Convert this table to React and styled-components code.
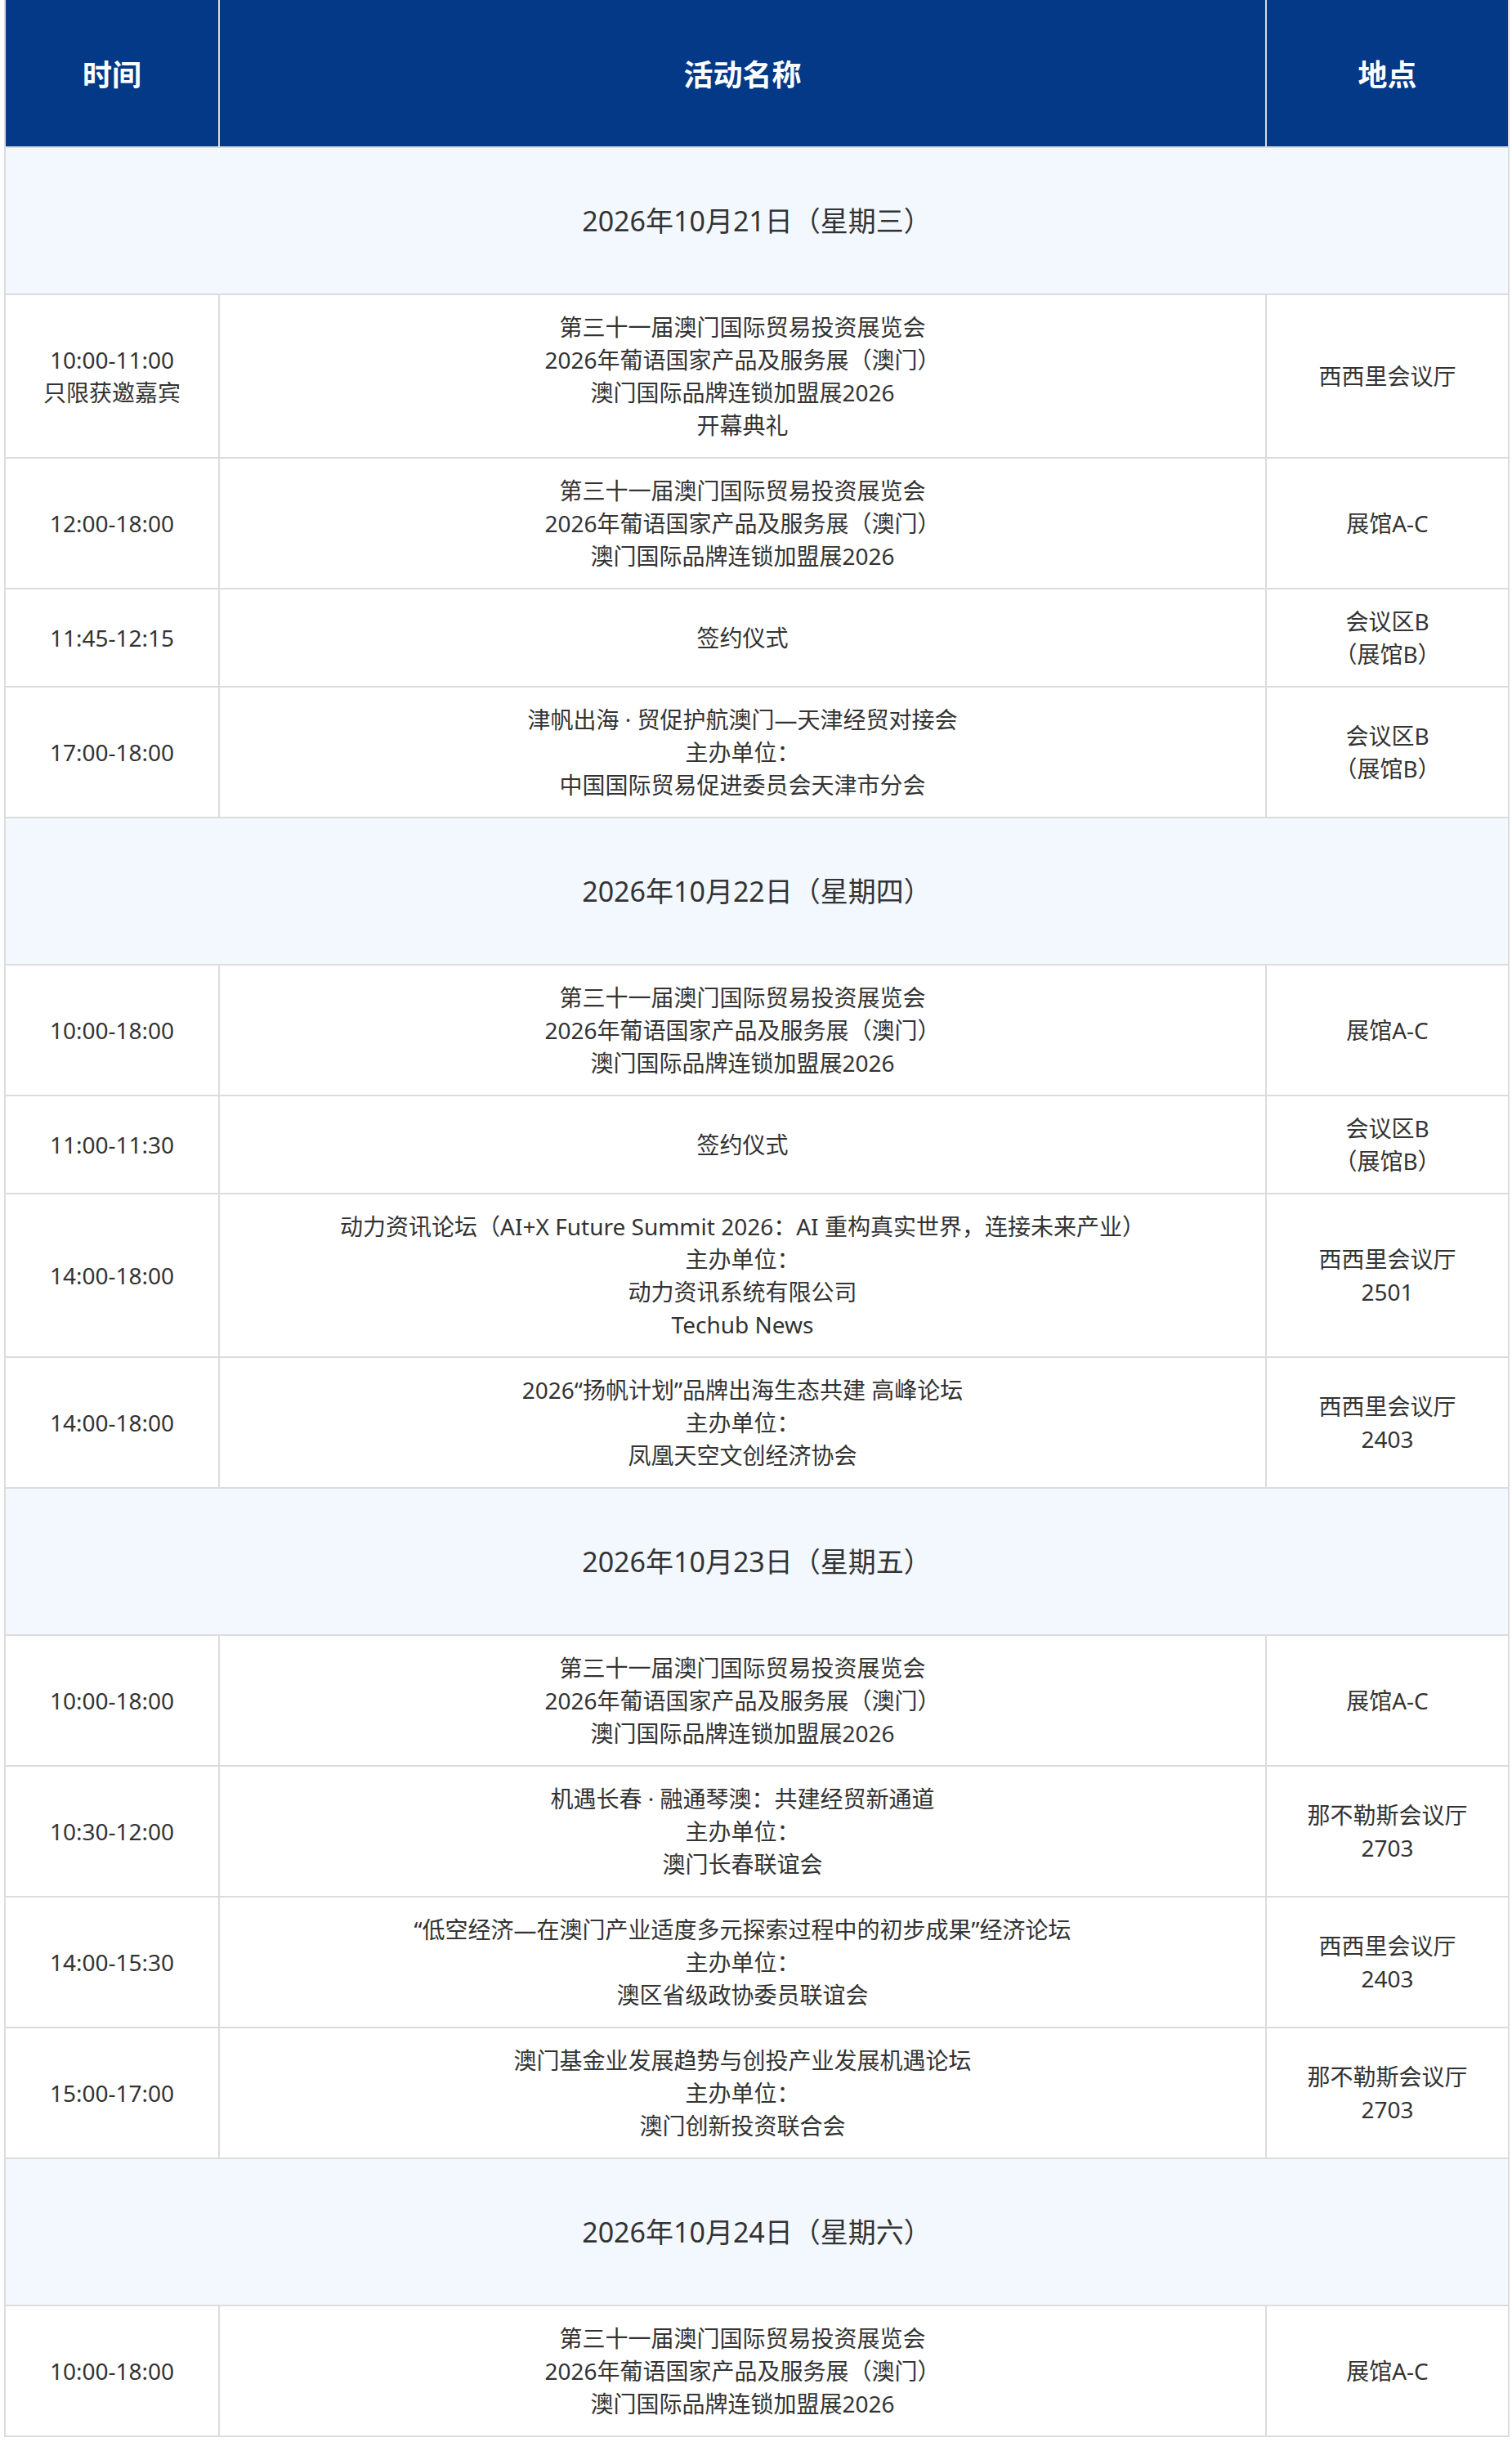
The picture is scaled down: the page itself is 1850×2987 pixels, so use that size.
import React from "react";
import styled, { createGlobalStyle } from "styled-components";

const GlobalStyle = createGlobalStyle`
  body {
    margin: 0;
    background: #ffffff;
    font-family: "Noto Sans", "Noto Sans CJK SC", sans-serif;
  }
`;

const EXPO = [
  "第三十一届澳门国际贸易投资展览会",
  "2026年葡语国家产品及服务展（澳门）",
  "澳门国际品牌连锁加盟展2026",
];

const schedule = [
  {
    day: "2026年10月21日（星期三）",
    items: [
      { time: ["10:00-11:00", "只限获邀嘉宾"], name: [...EXPO, "开幕典礼"], place: ["西西里会议厅"] },
      { time: ["12:00-18:00"], name: EXPO, place: ["展馆A-C"] },
      { time: ["11:45-12:15"], name: ["签约仪式"], place: ["会议区B", "（展馆B）"] },
      {
        time: ["17:00-18:00"],
        name: ["津帆出海 · 贸促护航澳门—天津经贸对接会", "主办单位：", "中国国际贸易促进委员会天津市分会"],
        place: ["会议区B", "（展馆B）"],
      },
    ],
  },
  {
    day: "2026年10月22日（星期四）",
    items: [
      { time: ["10:00-18:00"], name: EXPO, place: ["展馆A-C"] },
      { time: ["11:00-11:30"], name: ["签约仪式"], place: ["会议区B", "（展馆B）"] },
      {
        time: ["14:00-18:00"],
        name: [
          "动力资讯论坛（AI+X Future Summit 2026：AI 重构真实世界，连接未来产业）",
          "主办单位：",
          "动力资讯系统有限公司",
          "Techub News",
        ],
        place: ["西西里会议厅", "2501"],
      },
      {
        time: ["14:00-18:00"],
        name: ["2026“扬帆计划”品牌出海生态共建 高峰论坛", "主办单位：", "凤凰天空文创经济协会"],
        place: ["西西里会议厅", "2403"],
      },
    ],
  },
  {
    day: "2026年10月23日（星期五）",
    items: [
      { time: ["10:00-18:00"], name: EXPO, place: ["展馆A-C"] },
      {
        time: ["10:30-12:00"],
        name: ["机遇长春 · 融通琴澳：共建经贸新通道", "主办单位：", "澳门长春联谊会"],
        place: ["那不勒斯会议厅", "2703"],
      },
      {
        time: ["14:00-15:30"],
        name: ["“低空经济—在澳门产业适度多元探索过程中的初步成果”经济论坛", "主办单位：", "澳区省级政协委员联谊会"],
        place: ["西西里会议厅", "2403"],
      },
      {
        time: ["15:00-17:00"],
        name: ["澳门基金业发展趋势与创投产业发展机遇论坛", "主办单位：", "澳门创新投资联合会"],
        place: ["那不勒斯会议厅", "2703"],
      },
    ],
  },
  {
    day: "2026年10月24日（星期六）",
    items: [{ time: ["10:00-18:00"], name: EXPO, place: ["展馆A-C"] }],
  },
];

const Page = styled.div`
  padding: 0 5px;
`;

const Table = styled.table`
  width: 100%;
  border-collapse: collapse;
  table-layout: fixed;
`;

const Col = styled.col`
  width: ${(p) => p.$w}px;
`;

const HeadCell = styled.th`
  height: 179px;
  padding: 0;
  background: #033986;
  color: #ffffff;
  font-size: 36px;
  font-weight: 700;
  text-align: center;
  vertical-align: middle;
  border: 2px solid #dcdcdc;
  border-top: hidden;
`;

const DayCell = styled.td`
  height: 178px;
  padding: 0;
  background: #f3f8fe;
  color: #333333;
  font-size: 34px;
  line-height: 48px;
  text-align: center;
  vertical-align: middle;
  border: 2px solid #dcdcdc;
`;

const Cell = styled.td`
  padding: 19px 10px;
  color: #333333;
  font-size: 28px;
  line-height: 40px;
  text-align: center;
  vertical-align: middle;
  border: 2px solid #dcdcdc;
  background: #ffffff;
`;

const Line = styled.div`
  white-space: nowrap;
`;

function Lines({ list }) {
  return list.map((t, i) => <Line key={i}>{t}</Line>);
}

export default function App() {
  return (
    <Page>
      <GlobalStyle />
      <Table>
        <colgroup>
          <Col $w={262} />
          <Col $w={1281} />
          <Col $w={297} />
        </colgroup>
        <thead>
          <tr>
            <HeadCell>时间</HeadCell>
            <HeadCell>活动名称</HeadCell>
            <HeadCell>地点</HeadCell>
          </tr>
        </thead>
        <tbody>
          {schedule.map((d) => (
            <React.Fragment key={d.day}>
              <tr>
                <DayCell colSpan={3}>{d.day}</DayCell>
              </tr>
              {d.items.map((it, i) => (
                <tr key={i}>
                  <Cell>
                    <Lines list={it.time} />
                  </Cell>
                  <Cell>
                    <Lines list={it.name} />
                  </Cell>
                  <Cell>
                    <Lines list={it.place} />
                  </Cell>
                </tr>
              ))}
            </React.Fragment>
          ))}
        </tbody>
      </Table>
    </Page>
  );
}
